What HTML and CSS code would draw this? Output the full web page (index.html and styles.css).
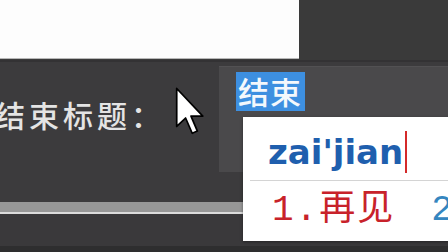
FILE: index.html
```html
<!DOCTYPE html>
<html lang="zh-CN">
  <head>
    <meta charset="UTF-8" />
    <title>结束标题</title>
    <link rel="stylesheet" href="styles.css">
  </head>
  <body>
    <div class="screen">
      <div class="top">
        <div class="preview"></div>
      </div>

      <div class="main">
        <label class="caption" for="title-end">结束标题：</label>
        <div class="field" id="title-end">
          <span class="selection">结束</span>
        </div>
      </div>

      <div class="bar"></div>
      <div class="bottom"></div>

      <svg class="pointer" width="30" height="48" viewBox="0 0 12 19.5">
        <path d="M0.6 0.6 L0.6 16 L4.2 12.6 L6.9 18.8 L9 17.9 L6.4 11.8 L11.2 11.8 Z"
              fill="#fff" stroke="#000" stroke-width="0.7" stroke-linejoin="round" />
      </svg>

      <div class="ime">
        <div class="pinyin">zai'jian<span class="caret"></span></div>
        <div class="cands">
          <span class="cand first">1.再见</span>
          <span class="cand">2</span>
        </div>
      </div>
    </div>
  </body>
</html>
```

FILE: styles.css
```css
* {
  box-sizing: border-box;
}
body {
  margin: 0;
  background: #3c3b3d;
  font-family: "Noto Sans CJK SC", "Noto Sans", sans-serif;
}
.screen {
  position: relative;
  width: 448px;
  height: 252px;
  overflow: hidden;
  display: flex;
  flex-direction: column;
}
.top {
  height: 62px;
  background: #3a3a3a;
  border-bottom: 2px solid #333234;
}
.preview {
  width: 299px;
  height: 59px;
  background: #fdfdfd;
  border-bottom: 1px solid #b8b8b8;
}
.main {
  height: 140px;
  display: flex;
  align-items: flex-start;
  padding-top: 4px;
}
.caption {
  margin: 29px 0 0 -5px;
  font-size: 30px;
  font-weight: 500;
  line-height: 38px;
  letter-spacing: 4px;
  color: #e4e4e4;
}
.field {
  margin-left: auto;
  width: 229px;
  height: 106px;
  background: #4a494b;
  border-top: 1px solid #525153;
  padding: 5px 0 0 17px;
}
.selection {
  display: inline-block;
  width: 69px;
  height: 39px;
  padding-left: 2px;
  background: #3d8fe0;
  color: #f4f8fc;
  font-size: 31px;
  font-weight: 500;
  line-height: 38px;
  letter-spacing: 1px;
  white-space: nowrap;
}
.bar {
  height: 12px;
  background: #979797;
  border-bottom: 2px solid #dcdcdc;
  margin-right: 205px;
}
.bottom {
  flex: 1;
  background: #3a393b;
  border-bottom: 6px solid #2e2e2f;
}
.pointer {
  position: absolute;
  left: 175px;
  top: 87px;
}
.ime {
  position: absolute;
  left: 243px;
  top: 117px;
  width: 210px;
  height: 124px;
  background: #fff;
  box-shadow: 0 1px 3px rgba(0, 0, 0, 0.4);
}
.pinyin {
  height: 63px;
  padding: 14px 0 0 25px;
  font-family: "DejaVu Sans", sans-serif;
  font-weight: bold;
  font-size: 34px;
  line-height: 34px;
  color: #1f5fae;
}
.caret {
  display: inline-block;
  width: 2px;
  height: 42px;
  margin-left: 2px;
  vertical-align: -9px;
  background: #d42a2a;
}
.cands {
  margin-left: 7px;
  border-top: 1px solid #d4d4d4;
  padding: 10px 0 0 22px;
  display: flex;
  gap: 36px;
  font-family: "Liberation Mono", "Noto Sans CJK SC", monospace;
  font-size: 36px;
  line-height: 40px;
}
.cand {
  color: #3586c0;
}
.cand.first {
  color: #c8222a;
  letter-spacing: 2px;
}
```
